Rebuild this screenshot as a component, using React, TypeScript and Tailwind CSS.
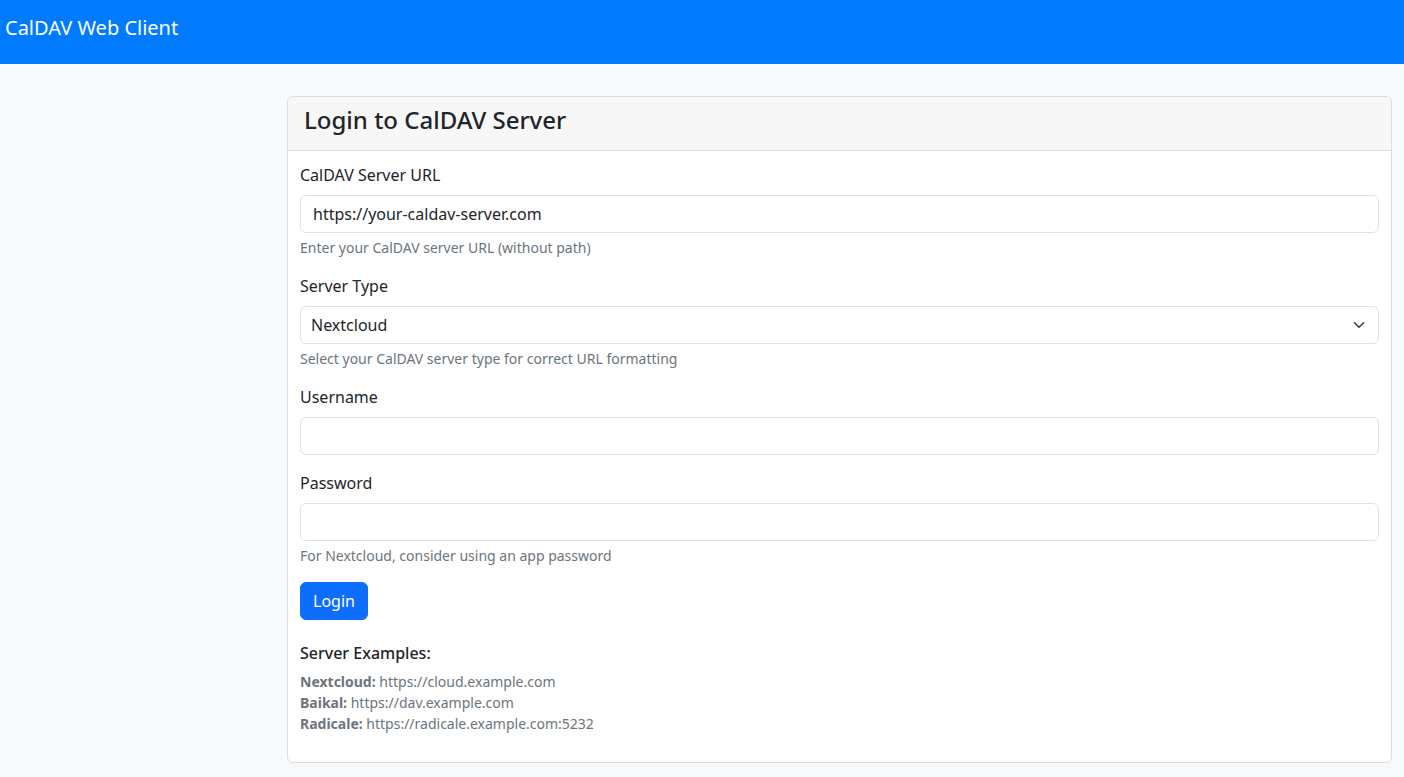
import React from "react";

const font = { fontFamily: '"Noto Sans", "Liberation Sans", sans-serif' };

function Field({ label, children, help }: { label: string; children: React.ReactNode; help?: string }) {
  return (
    <div className="mb-4">
      <label className="block mb-2 text-[16px] leading-[24px] text-[#212529]">{label}</label>
      {children}
      {help && <div className="mt-1 text-[14px] leading-[21px] text-[#6c757d]">{help}</div>}
    </div>
  );
}

function TextInput({ value, type = "text" }: { value?: string; type?: string }) {
  return (
    <input
      type={type}
      defaultValue={value}
      className="block w-full h-[38px] px-3 border border-[#dee2e6] rounded-[6px] bg-white text-[16px] text-[#212529] outline-none"
      style={font}
    />
  );
}

export default function App() {
  return (
    <div className="min-h-[777px] bg-[#f8f9fa]" style={font}>
      <nav className="h-[64px] bg-[#007bff] pl-[5px] pt-[13px]">
        <span className="text-[20px] leading-[30px] text-white">CalDAV Web Client</span>
      </nav>
      <div className="flex pt-[32px] pr-[12px] pb-[14px]">
        <div className="w-[287px] shrink-0" />
        <div className="flex-1 bg-white border border-[#dcdddf] rounded-[6px] overflow-hidden">
          <div className="bg-[#f7f7f7] border-b border-[#dcdddf] px-4 pt-2 pb-4">
            <h4 className="text-[24px] leading-[29px] font-medium text-[#212529]">Login to CalDAV Server</h4>
          </div>
          <div className="p-3">
            <Field label="CalDAV Server URL" help="Enter your CalDAV server URL (without path)">
              <TextInput value="https://your-caldav-server.com" />
            </Field>
            <Field label="Server Type" help="Select your CalDAV server type for correct URL formatting">
              <div className="relative">
                <div className="flex items-center w-full h-[38px] pl-[10px] pr-9 border border-[#dee2e6] rounded-[6px] bg-white text-[16px] text-[#212529]">
                  Nextcloud
                </div>
                <svg className="absolute right-3 top-[13px]" width="16" height="12" viewBox="0 0 16 16" fill="none">
                  <path d="m2 5 6 6 6-6" stroke="#343a40" strokeWidth="2" strokeLinecap="round" strokeLinejoin="round" />
                </svg>
              </div>
            </Field>
            <Field label="Username">
              <TextInput />
            </Field>
            <Field label="Password" help="For Nextcloud, consider using an app password">
              <TextInput type="password" />
            </Field>
            <button className="h-[38px] px-3 border border-[#0d6efd] rounded-[6px] bg-[#0d6efd] text-white text-[16px] leading-[24px]">Login</button>
            <div className="mt-6">
              <h6 className="text-[16px] leading-[19px] font-medium text-[#212529] mb-2">Server Examples:</h6>
              <p className="text-[14px] leading-[21px] text-[#6c757d] mb-4">
                <b className="font-bold">Nextcloud:</b> https://cloud.example.com
                <br />
                <b className="font-bold">Baikal:</b> https://dav.example.com
                <br />
                <b className="font-bold">Radicale:</b> https://radicale.example.com:5232
              </p>
            </div>
          </div>
        </div>
      </div>
    </div>
  );
}
